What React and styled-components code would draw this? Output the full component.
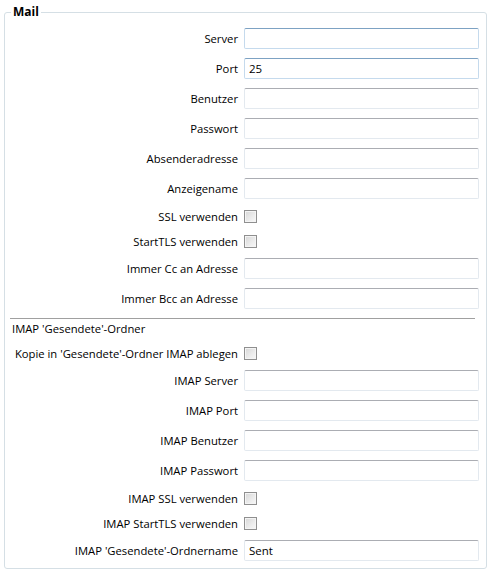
import React from "react";
import styled, { createGlobalStyle } from "styled-components";

const Global = createGlobalStyle`
  html, body { margin: 0; padding: 0; background: #ffffff; }
  body { font-family: "Open Sans", "Noto Sans", sans-serif; font-size: 11.25px; color: #000; }
  * { box-sizing: border-box; }
`;

const Group = styled.section`
  position: relative;
  margin: 12px 0 0 4px;
  width: 483px;
  border: 1px solid #d5dfe5;
  border-radius: 3px;
  padding: 15px 6px 7px 7px;
  display: flex;
  flex-direction: column;
  gap: 9px;
`;

const Title = styled.h2`
  position: absolute;
  top: -9px;
  left: 6px;
  margin: 0;
  padding: 0 2px;
  background: #fff;
  font-size: 12px;
  font-weight: 700;
  line-height: 16px;
`;

const Row = styled.div`
  display: grid;
  grid-template-columns: 226px 235px;
  column-gap: 6px;
  align-items: center;
  height: ${(p) => p.$h || 21}px;
`;

const Label = styled.label`
  text-align: right;
  white-space: nowrap;
  line-height: 15px;
`;

const Heading = styled.div`
  white-space: nowrap;
  line-height: 15px;
  height: 15px;
  margin-top: -7px;
`;

const Separator = styled.hr`
  margin: 0 5px 0 -2px;
  border: 0;
  height: 1px;
  background: #a0a0a0;
`;

const Field = styled.input`
  width: 235px;
  height: 21px;
  margin: 0;
  padding: 0 4px;
  font: inherit;
  font-size: 11.5px;
  color: #000;
  background: #fff;
  border: 1px solid ${(p) => (p.$active ? "#c5daed" : "#e3e9ef")};
  border-top-color: ${(p) => (p.$active ? "#7da2c3" : "#abadb3")};
  border-radius: 2px;
  outline: none;
`;

const Check = styled.input.attrs({ type: "checkbox" })`
  appearance: none;
  -webkit-appearance: none;
  margin: 0;
  width: 13px;
  height: 13px;
  border: 1px solid #8f8f8f;
  background: linear-gradient(135deg, #d6d6d6 0%, #ececec 60%, #f8f8f8 100%);
  box-shadow: inset 0 0 0 1px #f4f4f4;
`;

const textRow = (label, value, active) => (
  <Row key={label}>
    <Label>{label}</Label>
    <Field defaultValue={value} $active={active} />
  </Row>
);

const checkRow = (label) => (
  <Row key={label} $h={16}>
    <Label>{label}</Label>
    <Check />
  </Row>
);

export default function App() {
  return (
    <>
      <Global />
      <Group>
        <Title>Mail</Title>
        {textRow("Server", "", true)}
        {textRow("Port", "25", true)}
        {textRow("Benutzer", "")}
        {textRow("Passwort", "")}
        {textRow("Absenderadresse", "")}
        {textRow("Anzeigename", "")}
        {checkRow("SSL verwenden")}
        {checkRow("StartTLS verwenden")}
        {textRow("Immer Cc an Adresse", "")}
        {textRow("Immer Bcc an Adresse", "")}
        <Separator />
        <Heading>IMAP 'Gesendete'-Ordner</Heading>
        {checkRow("Kopie in 'Gesendete'-Ordner IMAP ablegen")}
        {textRow("IMAP Server", "")}
        {textRow("IMAP Port", "")}
        {textRow("IMAP Benutzer", "")}
        {textRow("IMAP Passwort", "")}
        {checkRow("IMAP SSL verwenden")}
        {checkRow("IMAP StartTLS verwenden")}
        {textRow("IMAP 'Gesendete'-Ordnername", "Sent")}
      </Group>
    </>
  );
}
